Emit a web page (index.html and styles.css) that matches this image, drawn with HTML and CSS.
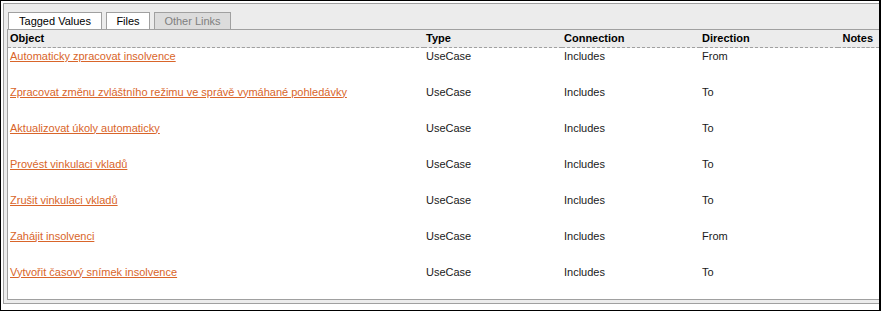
FILE: index.html
```html
<!DOCTYPE html>
<html lang="cs">
  <head>
    <meta charset="UTF-8" />
    <title>Links</title>
    <link rel="stylesheet" href="styles.css">
  </head>
  <body>
    <div class="frame">
      <div class="panel">
        <div class="tabs">
          <div class="tab tab-tagged">Tagged Values</div>
          <div class="tab tab-files">Files</div>
          <div class="tab tab-links disabled">Other Links</div>
        </div>

        <div class="content">
          <table class="links">
            <colgroup>
              <col class="col-object" />
              <col class="col-type" />
              <col class="col-conn" />
              <col class="col-dir" />
              <col class="col-notes" />
            </colgroup>
            <thead>
              <tr>
                <th>Object</th>
                <th>Type</th>
                <th>Connection</th>
                <th>Direction</th>
                <th class="notes">Notes</th>
              </tr>
            </thead>
            <tbody>
              <tr>
                <td><a href="#">Automaticky zpracovat insolvence</a></td>
                <td>UseCase</td>
                <td>Includes</td>
                <td>From</td>
                <td></td>
              </tr>
              <tr>
                <td><a href="#">Zpracovat změnu zvláštního režimu ve správě vymáhané pohledávky</a></td>
                <td>UseCase</td>
                <td>Includes</td>
                <td>To</td>
                <td></td>
              </tr>
              <tr>
                <td><a href="#">Aktualizovat úkoly automaticky</a></td>
                <td>UseCase</td>
                <td>Includes</td>
                <td>To</td>
                <td></td>
              </tr>
              <tr>
                <td><a href="#">Provést vinkulaci vkladů</a></td>
                <td>UseCase</td>
                <td>Includes</td>
                <td>To</td>
                <td></td>
              </tr>
              <tr>
                <td><a href="#">Zrušit vinkulaci vkladů</a></td>
                <td>UseCase</td>
                <td>Includes</td>
                <td>To</td>
                <td></td>
              </tr>
              <tr>
                <td><a href="#">Zahájit insolvenci</a></td>
                <td>UseCase</td>
                <td>Includes</td>
                <td>From</td>
                <td></td>
              </tr>
              <tr>
                <td><a href="#">Vytvořit časový snímek insolvence</a></td>
                <td>UseCase</td>
                <td>Includes</td>
                <td>To</td>
                <td></td>
              </tr>
            </tbody>
          </table>
        </div>
      </div>
    </div>
  </body>
</html>
```

FILE: styles.css
```css
/* Základ */
body {
  margin: 0;
  padding: 0;
  background-color: #fff;
  font-family: "Liberation Sans", Arial, sans-serif;
  font-size: 11px;
  color: #1a1a1a;
}

/* Rámeček okna */
.frame {
  box-sizing: border-box;
  width: 881px;
  height: 311px;
  border: 1px solid #000;
  border-right-width: 2px;
  padding: 2px 0 0 2px;
}

.panel {
  box-sizing: border-box;
  height: 301px;
  background-color: #ececec;
  border: 1px solid #a0a0a0;
  border-right: none;
  padding: 8px 0 3px 3px;
}

/* Záložky */
.tabs {
  display: flex;
  gap: 4px;
  padding-left: 1px;
}

.tab {
  box-sizing: border-box;
  height: 17px;
  line-height: 16px;
  text-align: center;
  background-color: #fff;
  border: 1px solid #a0a0a0;
  border-bottom: none;
  color: #000;
}

.tab-tagged {
  width: 94px;
}

.tab-files {
  width: 44px;
}

.tab-links {
  width: 77px;
}

.tab.disabled {
  background-color: #dcdcdc;
  color: #808080;
}

/* Obsah */
.content {
  box-sizing: border-box;
  height: 271px;
  background-color: #fff;
  border-top: 1px solid #a0a0a0;
  border-left: 1px solid #a0a0a0;
  border-bottom: 1px solid #a0a0a0;
  overflow: hidden;
}

.links {
  width: 100%;
  border-collapse: collapse;
  table-layout: fixed;
}

.col-object {
  width: 416px;
}

.col-type,
.col-conn,
.col-dir {
  width: 138px;
}

th {
  height: 17px;
  padding: 0 2px;
  line-height: 13px;
  text-align: left;
  font-weight: bold;
  color: #000;
  background-color: #ececec;
  border-bottom: 1px dashed #a0a0a0;
}

th.notes {
  text-align: right;
  padding-right: 6px;
}

td {
  height: 36px;
  box-sizing: border-box;
  padding: 2px 2px 0;
  line-height: 13px;
  vertical-align: top;
  white-space: nowrap;
}

td a {
  color: #d9652a;
  text-decoration: underline;
}
```
